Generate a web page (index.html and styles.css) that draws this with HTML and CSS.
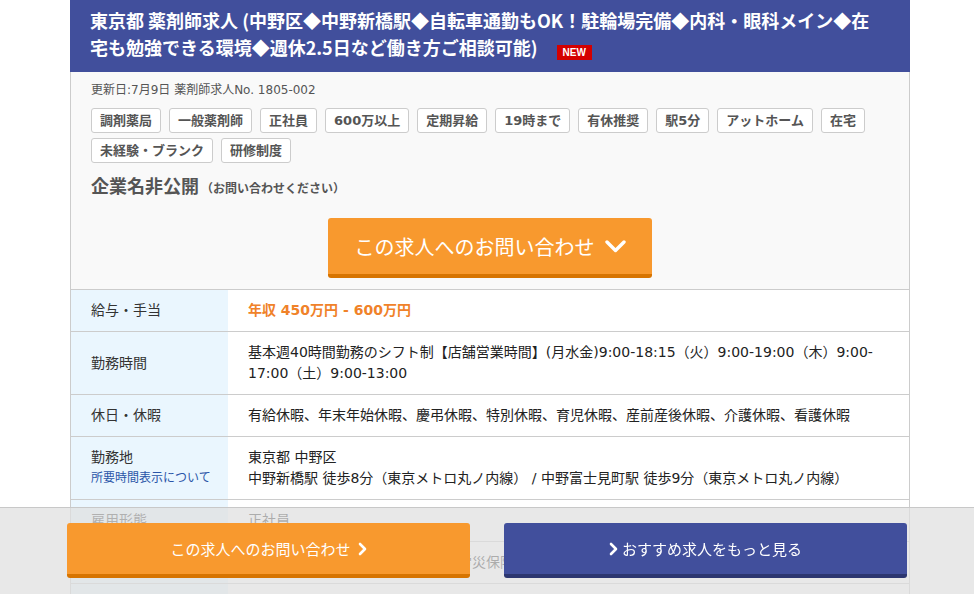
FILE: index.html
```html
<!DOCTYPE html>
<html lang="ja">
<head>
<meta charset="utf-8">
<title>東京都 薬剤師求人</title>
<link rel="stylesheet" href="styles.css">
</head>
<body>
<div class="job">
  <h1 class="job-title">東京都 薬剤師求人 (中野区◆中野新橋駅◆自転車通勤もOK！駐輪場完備◆内科・眼科メイン◆在宅も勉強できる環境◆週休2.5日など働き方ご相談可能)<span class="badge-new">NEW</span></h1>
  <div class="panel">
    <p class="meta">更新日:7月9日 薬剤師求人No. 1805-002</p>
    <ul class="tags">
      <li class="tag">調剤薬局</li>
      <li class="tag">一般薬剤師</li>
      <li class="tag">正社員</li>
      <li class="tag">600万以上</li>
      <li class="tag">定期昇給</li>
      <li class="tag">19時まで</li>
      <li class="tag">有休推奨</li>
      <li class="tag">駅5分</li>
      <li class="tag">アットホーム</li>
      <li class="tag">在宅</li>
      <li class="tag">未経験・ブランク</li>
      <li class="tag">研修制度</li>
    </ul>
    <p class="company">企業名非公開<span class="company-note">（お問い合わせください）</span></p>
    <div class="cta-wrap">
      <a class="cta-big" href="#">この求人へのお問い合わせ<svg class="chev-down" width="21" height="13" viewBox="0 0 21 13"><path d="M2 2 L10.5 10.5 L19 2" fill="none" stroke="#fff" stroke-width="3.4" stroke-linecap="round" stroke-linejoin="round"/></svg></a>
    </div>
  </div>
  <table class="details">
    <tr>
      <th>給与・手当</th>
      <td class="salary">年収 450万円 - 600万円</td>
    </tr>
    <tr>
      <th>勤務時間</th>
      <td>基本週40時間勤務のシフト制【店舗営業時間】(月水金)9:00-18:15（火）9:00-19:00（木）9:00-17:00（土）9:00-13:00</td>
    </tr>
    <tr>
      <th>休日・休暇</th>
      <td>有給休暇、年末年始休暇、慶弔休暇、特別休暇、育児休暇、産前産後休暇、介護休暇、看護休暇</td>
    </tr>
    <tr>
      <th>勤務地<a class="note-link" href="#">所要時間表示について</a></th>
      <td>東京都 中野区<br>中野新橋駅 徒歩8分（東京メトロ丸ノ内線） / 中野富士見町駅 徒歩9分（東京メトロ丸ノ内線）</td>
    </tr>
    <tr>
      <th>雇用形態</th>
      <td>正社員</td>
    </tr>
    <tr>
      <th>加入保険</th>
      <td>健康保険、厚生年金、雇用保険、労災保険</td>
    </tr>
    <tr>
      <th>福利厚生</th>
      <td>交通費支給、制服貸与</td>
    </tr>
  </table>
</div>
<div class="bottom-bar">
  <a class="bar-btn bar-btn-orange" href="#">この求人へのお問い合わせ <svg width="9" height="14" viewBox="0 0 9 14"><path d="M2 2 L7 7 L2 12" fill="none" stroke="#fff" stroke-width="2.6" stroke-linecap="round" stroke-linejoin="round"/></svg></a>
  <a class="bar-btn bar-btn-blue" href="#"><svg width="9" height="14" viewBox="0 0 9 14"><path d="M2 2 L7 7 L2 12" fill="none" stroke="#fff" stroke-width="2.6" stroke-linecap="round" stroke-linejoin="round"/></svg>おすすめ求人をもっと見る</a>
</div>
</body>
</html>
```
FILE: styles.css
```css
html, body {
  margin: 0;
  padding: 0;
  overflow: hidden;
  background: #fff;
}
body {
  font-family: "DejaVu Sans", "Noto Sans CJK JP", sans-serif;
  color: #333;
  font-size: 14px;
}
.job {
  width: 840px;
  margin-left: 70px;
}
.job-title {
  margin: 0;
  background: #414f9c;
  color: #fff;
  font-family: "Noto Sans CJK JP", sans-serif;
  font-size: 18px;
  font-weight: bold;
  line-height: 27px;
  padding: 7px 30px 11px 20px;
}
.badge-new {
  display: inline-block;
  background: #d40000;
  color: #fff;
  font-family: "Liberation Sans", sans-serif;
  font-size: 10px;
  font-weight: bold;
  line-height: 15px;
  height: 15px;
  padding: 0 6px;
  margin-left: 19px;
  vertical-align: -1px;
}
.panel {
  background: #f9f9f9;
  border-left: 1px solid #ccc;
  border-right: 1px solid #ccc;
  padding: 9px 20px 11px;
}
.meta {
  margin: 0;
  font-size: 12px;
  line-height: 18px;
  color: #555;
}
.tags {
  list-style: none;
  margin: 9px 0 0;
  padding: 0;
  display: flex;
  flex-wrap: wrap;
  column-gap: 8px;
  row-gap: 5px;
}
.tag {
  background: #fff;
  border: 1px solid #ccc;
  border-radius: 3px;
  font-size: 13px;
  font-weight: bold;
  color: #555;
  line-height: 23px;
  padding: 0 8px;
}
.company {
  margin: 12px 0 0;
  font-size: 18px;
  font-weight: bold;
  line-height: 24px;
  color: #555;
}
.company-note {
  font-size: 12px;
  margin-left: 2px;
}
.cta-wrap {
  display: flex;
  justify-content: center;
  margin-top: 17px;
}
.cta-big {
  display: flex;
  align-items: center;
  justify-content: center;
  gap: 10px;
  width: 324px;
  box-sizing: border-box;
  background: #f8992e;
  border-bottom: 4px solid #d77400;
  border-radius: 3px;
  color: #fff;
  text-decoration: none;
  font-size: 20px;
  height: 60px;
}
.details {
  width: 100%;
  border-collapse: collapse;
  border-left: 1px solid #ccc;
  border-right: 1px solid #ccc;
  border-top: 1px solid #ccc;
}
.details th,
.details td {
  border-bottom: 1px solid #ccc;
  padding: 10px 20px;
  line-height: 21px;
  font-size: 14px;
  text-align: left;
}
.details th {
  width: 127px;
  padding-right: 10px;
  background: #eaf6fe;
  font-weight: normal;
  color: #333;
}
.details td {
  color: #222;
}
.details td.salary {
  color: #f08229;
  font-weight: bold;
}
.note-link {
  display: block;
  font-size: 12px;
  white-space: nowrap;
  color: #2a55a8;
  text-decoration: none;
}
.bottom-bar {
  position: fixed;
  left: 0;
  right: 0;
  bottom: 0;
  height: 71px;
  border-top: 1px solid #c8c8c8;
  background: rgba(223, 223, 223, 0.73);
  padding-top: 15px;
  display: flex;
  justify-content: center;
  gap: 34px;
}
.bar-btn {
  width: 403px;
  height: 51px;
  border-radius: 3px;
  display: flex;
  align-items: center;
  justify-content: center;
  gap: 4px;
  color: #fff;
  text-decoration: none;
  font-size: 15px;
}
.bar-btn-orange {
  background: #f8992e;
  border-bottom: 4px solid #d77400;
  gap: 7px;
}
.bar-btn-blue {
  background: #414f9c;
  border-bottom: 4px solid #2c3670;
}
```
